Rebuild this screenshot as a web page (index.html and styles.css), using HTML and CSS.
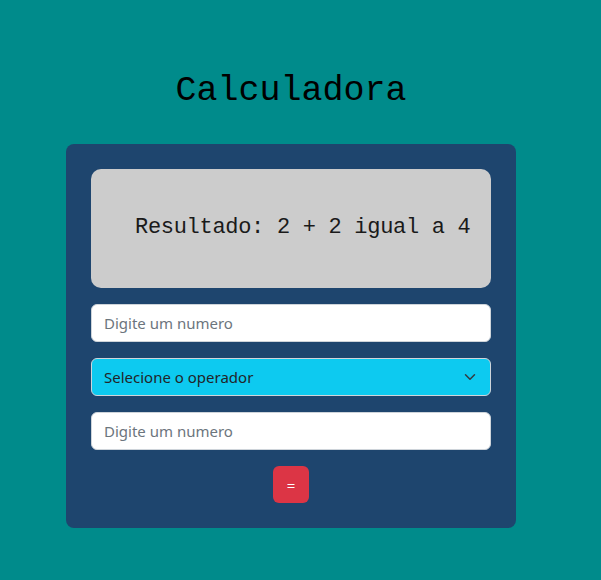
FILE: index.html
```html
<!DOCTYPE html>
<html lang="pt">
<head>
<meta charset="utf-8">
<title>Calculadora</title>
<link rel="stylesheet" href="styles.css">
</head>
<body>
<div class="page">
  <h1 class="title">Calculadora</h1>
  <div class="card">
    <div class="display">Resultado: 2 + 2 igual a 4</div>
    <input class="field" type="text" placeholder="Digite um numero">
    <div class="select">
      <span>Selecione o operador</span>
      <svg class="chev" width="16" height="16" viewBox="0 0 16 16"><path d="M2 5l6 6 6-6" fill="none" stroke="#343a40" stroke-width="2" stroke-linecap="round" stroke-linejoin="round"/></svg>
    </div>
    <input class="field" type="text" placeholder="Digite um numero">
    <div class="actions"><button class="btn">=</button></div>
  </div>
</div>
</body>
</html>
```

FILE: styles.css
```css
html, body {
  margin: 0;
  padding: 0;
  background: #008b8b;
  height: 100%;
}
body {
  font-family: "Noto Sans", "Open Sans", sans-serif;
  overflow: hidden;
}
.page {
  width: 582px;
  display: flex;
  flex-direction: column;
  align-items: center;
  padding-top: 67px;
}
.title {
  margin: 0 0 29px;
  font-family: "Liberation Mono", "DejaVu Sans Mono", monospace;
  font-weight: normal;
  font-size: 35px;
  line-height: 48px;
  color: #000;
}
.card {
  width: 400px;
  background: #1e456e;
  border-radius: 8px;
  padding: 25px;
  display: flex;
  flex-direction: column;
  gap: 16px;
}
.display {
  height: 119px;
  box-sizing: border-box;
  background: #cccccc;
  border-radius: 10px;
  display: flex;
  align-items: center;
  padding-left: 44px;
  padding-bottom: 2px;
  font-family: "Liberation Mono", "DejaVu Sans Mono", monospace;
  font-size: 22px;
  letter-spacing: -0.3px;
  color: #1a1a1a;
  white-space: nowrap;
}
.field, .select {
  box-sizing: border-box;
  width: 400px;
  height: 38px;
  border: 1px solid #ced4da;
  border-radius: 6px;
  padding: 0 12px;
  font-family: "Noto Sans", "Open Sans", sans-serif;
  font-size: 15px;
  margin: 0;
  outline: none;
  background: #fff;
}
.field::placeholder {
  color: #6c757d;
}
.select {
  background: #0dcaf0;
  display: flex;
  align-items: center;
  justify-content: space-between;
  color: #212529;
  padding-right: 14px;
}
.chev {
  width: 12px;
  height: 12px;
}
.actions {
  display: flex;
  justify-content: center;
}
.btn {
  width: 36px;
  height: 37px;
  border: none;
  border-radius: 6px;
  background: #dc3545;
  color: #fff;
  font-family: "Noto Sans", sans-serif;
  font-size: 15px;
  padding: 0;
}
```
